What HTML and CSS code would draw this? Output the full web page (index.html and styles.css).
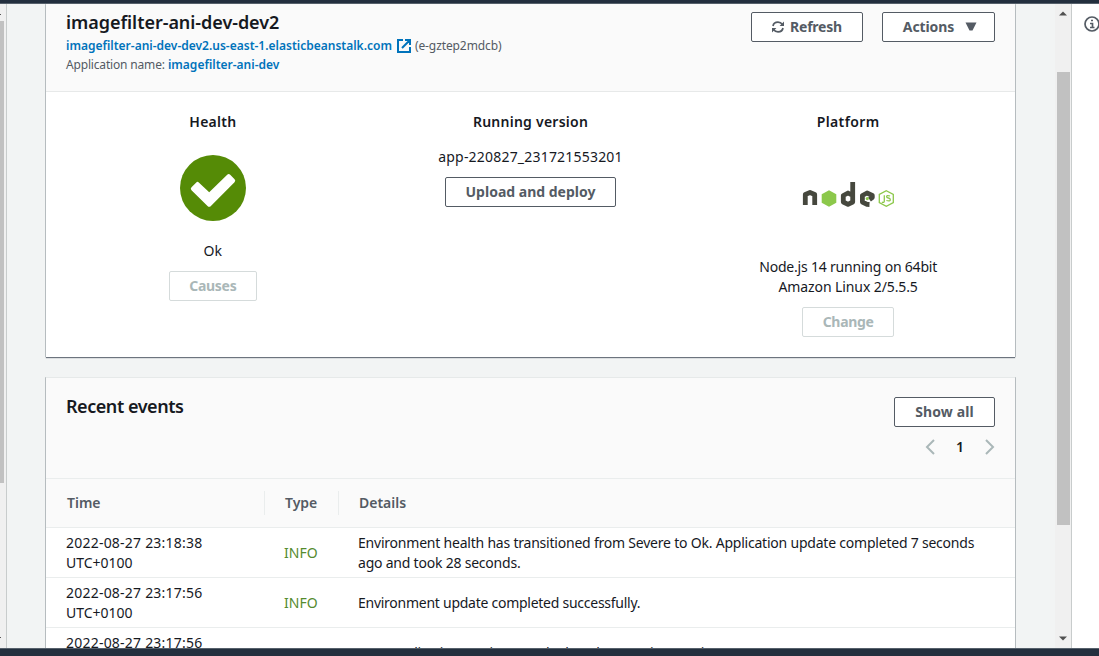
FILE: index.html
```html
<!DOCTYPE html>
<html lang="en">
<head>
<meta charset="utf-8">
<title>imagefilter-ani-dev-dev2</title>
<link rel="stylesheet" href="styles.css">
</head>
<body>
<div class="app">
  <div class="topbar"></div>
  <div class="workspace">
    <div class="nav-edge"><i class="edge-tick"></i><div class="nav-thumb"></div><i class="edge-tick low"></i></div>
    <main class="content">
      <section class="card environment">
        <header class="env-header">
          <div class="env-info">
            <h1>imagefilter-ani-dev-dev2</h1>
            <p class="url-line"><a>imagefilter-ani-dev-dev2.us-east-1.elasticbeanstalk.com</a><svg class="external" viewBox="0 0 14 14"><path d="M6 1H1v12h12V8M8 1h5v5M13 1L5 9"/></svg><span class="env-id">(e-gztep2mdcb)</span></p>
            <p class="app-line"><span class="app-label">Application name:</span> <a>imagefilter-ani-dev</a></p>
          </div>
          <div class="actions">
            <button class="btn refresh"><svg class="refresh-icon" viewBox="0 0 12 12"><path d="M1 5C1.400 2.600 3.600 1.200 6 1.200C7.800 1.200 9.300 2 10.500 3.600M11 7C10.600 9.400 8.400 10.800 6 10.800C4.200 10.800 2.700 10 1.500 8.400"/><path class="solid" d="M12 .4V5H7.600zM0 11.600V7H4.400z"/></svg><span>Refresh</span></button>
            <button class="btn menu"><span>Actions</span><svg class="caret" viewBox="0 0 12 10"><path d="M.5.5h11L7.500 8.500H4.500z"/></svg></button>
          </div>
        </header>
        <div class="overview">
          <div class="column">
            <h2>Health</h2>
            <svg class="health" viewBox="0 0 66 66"><circle cx="33" cy="33" r="33"/><path d="M11.500 32.200L16.300 27.400Q17.500 26.200 18.800 27.500L29.200 37.300L47.200 19.800Q48.700 18.300 50.200 19.800L54.600 24.300Q56 25.800 54.500 27.300L30.900 51Q29.200 52.700 27.500 51L11.500 35.200Q10 33.700 11.500 32.200z"/></svg>
            <p class="status">Ok</p>
            <button class="btn disabled causes">Causes</button>
          </div>
          <div class="column">
            <h2>Running version</h2>
            <p class="version">app-220827_231721553201</p>
            <button class="btn deploy">Upload and deploy</button>
          </div>
          <div class="column">
            <h2 class="platform-title">Platform</h2>
            <svg class="node-logo" viewBox="0 0 92 26" role="img" aria-label="node js">
              <g class="node-dark"><path d="M3.300 24V13.500L8 11.500L12.700 13.500V24"/><path d="M50.700 1V21L46 23.400L41.300 21V14.500L46 12L50.700 14.500"/><path d="M67.500 23.500L65 23.400L60.400 21V14.500L65 12L70.300 14.500V16.500L67.500 18.500"/></g>
              <path class="node-green" d="M27 9.200L34.300 13.200V21.800L27 25.800L19.700 21.800V13.200z"/>
              <circle class="node-green" cx="65.300" cy="17.600" r="1.600"/>
              <path class="node-ring" d="M84.300 9.700L91.300 13.500V21.500L84.300 25.300L77.300 21.500V13.500z"/>
              <path class="node-js" d="M82.300 14.200V20.300Q82.300 22 79.800 21.200M88.100 15Q84.600 13.900 84.600 15.500Q84.600 16.800 86.300 17Q88.300 17.200 88.300 18.700Q88.300 20.700 84.400 19.500"/>
            </svg>
            <p class="platform">Node.js 14 running on 64bit<br><span class="amazon">Amazon Linux 2/5.5.5</span></p>
            <button class="btn disabled change">Change</button>
          </div>
        </div>
      </section>
      <section class="card events">
        <header class="events-header">
          <h1 class="recent">Recent events</h1>
          <div class="events-tools">
            <button class="btn show">Show all</button>
            <div class="pager"><svg viewBox="0 0 10 16"><path d="M9 1L2 8l7 7"/></svg><b>1</b><svg viewBox="0 0 10 16"><path d="M1 1l7 7-7 7"/></svg></div>
          </div>
        </header>
        <div class="row head"><div class="th">Time</div><div class="th">Type</div><div class="th">Details</div></div>
        <div class="row"><div><span class="time">2022-08-27 23:18:38</span><br>UTC+0100</div><div class="info">INFO</div><div class="details">Environment health has transitioned from Severe to Ok. Application update completed 7 seconds<br>ago and took 28 seconds.</div></div>
        <div class="row"><div><span class="time">2022-08-27 23:17:56</span><br>UTC+0100</div><div class="info">INFO</div><div class="details brief">Environment update completed successfully.</div></div>
        <div class="row last"><div><span class="time">2022-08-27 23:17:56</span><br>UTC+0100</div><div class="info">INFO</div><div class="details brief">New application version was deployed to running EC2 instances.</div></div>
      </section>
    </main>
    <div class="scrollbar"><svg viewBox="0 0 8 5"><path d="M0 4.500L4 .5L8 4.500z"/></svg><div class="thumb"></div><svg class="down" viewBox="0 0 8 5"><path d="M0 .5L4 4.500L8 .5z"/></svg></div>
    <aside class="help"><svg viewBox="0 0 16 16"><circle cx="8" cy="8" r="7"/><path d="M7 4.500h2M6 7.500h2.500v4M6 11.500h4.500"/></svg></aside>
  </div>
  <div class="bottombar"></div>
</div>
</body>
</html>
```
FILE: styles.css
```css
* { box-sizing: border-box; }
body { margin: 0; overflow: hidden; background: #fff; color: #16191f; font: 14px/20px "Noto Sans", sans-serif; }
h1, h2, p { margin: 0; }
svg { display: block; flex: none; }
.app { height: 656px; display: flex; flex-direction: column; }
.topbar { height: 4px; flex: none; background: #232f3e; border-bottom: 1px solid #56606b; }
.bottombar { height: 8px; flex: none; background: #232f3e; border-top: 1px solid #56606b; }
.workspace { flex: 1; min-height: 0; display: flex; overflow: hidden; }
.nav-edge { width: 7px; background: #f0f0f0; border-right: 1px solid #c8cccc; }
.edge-tick { display: block; width: 1px; height: 1px; margin-top: 10px; background: #555; }
.nav-thumb { width: 4px; height: 462px; margin-top: 6px; background: #c1c1c1; }
.edge-tick.low { margin-top: 154px; }
.content { width: 1048px; padding: 0 40px 0 39px; background: #f2f4f4; overflow: hidden; }
.card { width: 969px; background: #fff; box-shadow: 0 1px 1px #6c747e, -1px 0 0 #c6cccd, 1px 0 0 #c6cccd; }
.environment { height: 353px; }
.events { height: 400px; margin-top: 20px; border-top: 1px solid #e6e9e9; }
.env-header { height: 88px; padding: 8px 20px 0; display: flex; justify-content: space-between; background: #fafafa; border-bottom: 1px solid #e7e9e9; }
h1 { font-size: 18px; line-height: 20px; font-weight: 600; letter-spacing: -.05px; }
.env-info p { font-size: 12px; line-height: 19px; color: #545b64; }
.env-info .url-line { display: flex; align-items: center; height: 19px; margin-top: 4px; }
.env-info a { color: #0073bb; font-weight: 600; }
.env-id { letter-spacing: -.1px; }
.app-label { letter-spacing: -.17px; }
.external { width: 14px; height: 14px; margin: 0 4px 0 5px; fill: none; stroke: #0073bb; stroke-width: 2; }
.actions { display: flex; gap: 19px; }
.btn { height: 30px; padding: 0; display: flex; align-items: center; justify-content: center; border: 1px solid #545b64; border-radius: 2px; background: #fff; color: #545b64; font: 700 14px/20px "Noto Sans", sans-serif; }
.disabled { border-color: #d5dbdb; color: #aab7b8; letter-spacing: -.3px; }
.refresh { width: 112px; gap: 6px; letter-spacing: -.2px; }
.menu { width: 113px; gap: 11px; padding-left: 3px; letter-spacing: -.1px; }
.refresh-icon { width: 12px; height: 12px; fill: none; stroke: #545b64; stroke-width: 1.700; }
.refresh-icon .solid { fill: #545b64; stroke: none; }
.caret { width: 12px; height: 10px; fill: #545b64; }
.overview { display: grid; grid-template-columns: repeat(3, 1fr); padding: 20px 8px; }
.column { display: flex; flex-direction: column; align-items: center; text-align: center; }
h2 { font-size: 14px; line-height: 20px; font-weight: 600; letter-spacing: .25px; }
.platform-title { letter-spacing: .4px; }
.health { width: 66px; height: 66px; margin-top: 23px; fill: #558b06; }
.health path { fill: #fff; }
.status { margin: 20px 0 10px; }
.causes { width: 88px; }
.version { margin: 15px 0 10px; letter-spacing: .2px; }
.deploy { width: 171px; }
.node-logo { width: 92px; height: 26px; margin: 49px 0 50px; }
.node-dark { fill: none; stroke: #46483e; stroke-width: 4.800; stroke-linejoin: round; }
.node-green { fill: #8cc84b; }
.node-ring, .node-js { fill: none; stroke: #8cc84b; stroke-width: 1.300; }
.platform { margin-bottom: 10px; letter-spacing: -.2px; }
.amazon { letter-spacing: -.1px; }
.change { width: 92px; }
.events-header { height: 100px; padding: 19px 20px 0; display: flex; justify-content: space-between; background: #fafafa; }
.recent { height: 20px; line-height: 18px; letter-spacing: -.45px; }
.events-tools { display: flex; flex-direction: column; align-items: flex-end; }
.show { width: 101px; letter-spacing: .1px; }
.pager { display: flex; align-items: center; gap: 20px; margin-top: 10px; }
.pager svg { width: 10px; height: 16px; fill: none; stroke: #aab7b8; stroke-width: 2; }
.pager b { width: 10px; text-align: center; font-weight: 600; }
.row { height: 50px; display: grid; grid-template-columns: 218px 74px 1fr; align-items: center; border-bottom: 1px solid #eaeded; }
.row > div { padding-left: 20px; }
.time { letter-spacing: .22px; }
.details { letter-spacing: -.215px; }
.brief { letter-spacing: -.26px; }
.last .details { padding-top: 1px; }
.head { background: #fafafa; border-top: 1px solid #eaeded; }
.row .th { height: 24px; line-height: 24px; color: #545b64; font-weight: 600; padding-left: 21px; }
.th + .th { border-left: 1px solid #eaeded; padding-left: 20px; }
.info { color: #558b2f; }
.scrollbar { width: 17px; padding: 7px 2px 5px; background: #f0f0f0; border-right: 1px solid #c8cccc; }
.scrollbar svg { width: 8px; height: 5px; margin: 0 auto; fill: #505050; }
.thumb { width: 13px; height: 453px; margin-top: 56px; background: #c1c1c1; }
.scrollbar .down { margin-top: 111px; }
.help { flex: 1; padding: 12px 0 0 12px; overflow: hidden; }
.help svg { width: 16px; height: 16px; fill: none; stroke: #545b64; stroke-width: 1.700; }
```
